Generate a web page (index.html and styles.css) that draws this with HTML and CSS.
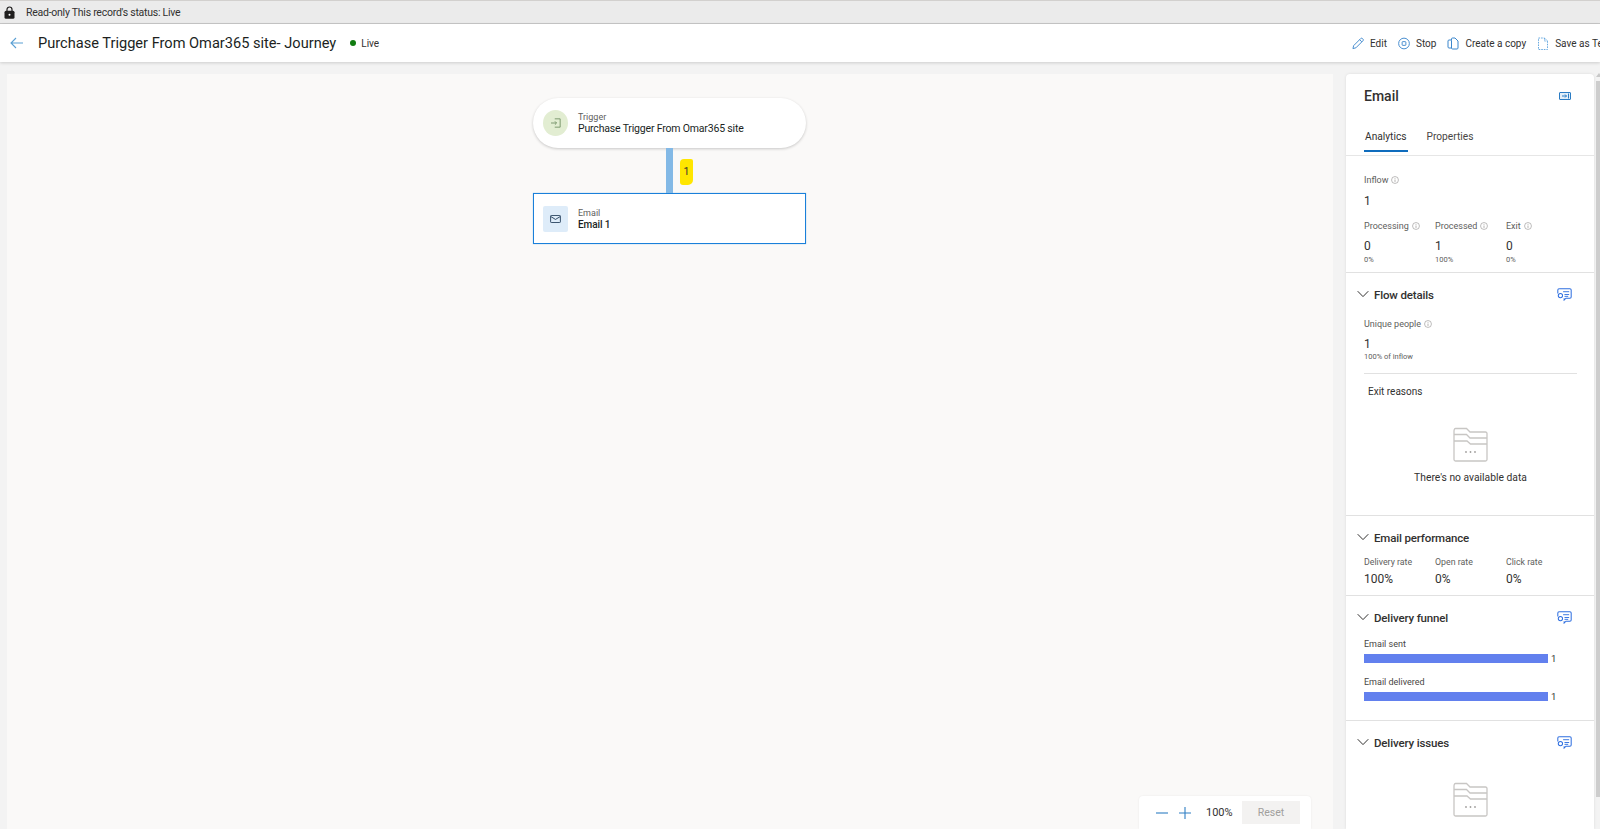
FILE: index.html
```html
<!DOCTYPE html>
<html lang="en">
<head>
<meta charset="utf-8">
<title>Purchase Trigger From Omar365 site- Journey</title>
<link rel="stylesheet" href="styles.css">
</head>
<body>
<svg class="defs" width="0" height="0" aria-hidden="true">
  <symbol id="info" viewBox="0 0 10 10"><circle cx="5" cy="5" r="4.3" fill="none" stroke="#8a8886" stroke-width=".7"/><path d="M5 4.4v3M5 2.6v.9" stroke="#8a8886" stroke-width=".8" fill="none"/></symbol>
  <symbol id="chev" viewBox="0 0 12 8"><path d="M.7 1.2 6 6.6l5.3-5.4" fill="none" stroke="#323130" stroke-width="1"/></symbol>
  <symbol id="chat" viewBox="0 0 16 14"><path d="M2.2.8h11.6c.8 0 1.4.6 1.4 1.4v7.4c0 .8-.6 1.4-1.4 1.4H9.6L7.6 13v-2.0" fill="none" stroke="#2f6fe0" stroke-width="1.1"/><path d="M.8 6V2.2C.8 1.400 1.400.8 2.200.8" fill="none" stroke="#2f6fe0" stroke-width="1.1"/><circle cx="3.600" cy="8.200" r="2.300" fill="none" stroke="#2f6fe0" stroke-width="1.100"/><path d="M6.500 4h6.500M8 7h5M8 9h4" stroke="#2f6fe0" stroke-width="1"/></symbol>
  <symbol id="folder" viewBox="0 0 35 35"><path d="M1 4.500V32.500c0 .9.600 1.500 1.500 1.500h30c.900 0 1.500-.600 1.500-1.500V6.500c0-.9-.600-1.500-1.500-1.500H17L13.500 1.500H2.500C1.600 1.500 1 2.500 1 4.500Z" fill="none" stroke="#c8c6c4" stroke-width="1.300"/><path d="M1 7.500h12.500l3.500 3.500h17M1 14h13l3.500 3h16.500" fill="none" stroke="#c8c6c4" stroke-width="1.300"/><circle cx="13" cy="25" r=".9" fill="#a19f9d"/><circle cx="17.500" cy="25" r=".9" fill="#a19f9d"/><circle cx="22" cy="25" r=".9" fill="#a19f9d"/></symbol>
</svg>

<div class="notice">
  <svg class="lock" viewBox="0 0 11 13"><path d="M3 5V3.500a2.500 2.500 0 0 1 5 0V5" fill="none" stroke="#201f1e" stroke-width="1.200"/><rect x=".5" y="4.800" width="10" height="8" rx="1.500" fill="#201f1e"/><circle cx="5.500" cy="8.800" r="1" fill="#fff"/></svg>
  <span>Read-only This record's status: Live</span>
</div>

<header class="topbar">
  <svg class="back" viewBox="0 0 13 12"><path d="M6 1 1 6l5 5M1 6h12" fill="none" stroke="#5a9fd4" stroke-width="1.100"/></svg>
  <h1 class="page-title">Purchase Trigger From Omar365 site- Journey</h1>
  <span class="status-dot"></span>
  <span class="status-text">Live</span>
  <span class="spacer"></span>
  <nav class="actions">
    <a class="action"><svg class="action-icon" viewBox="0 0 13 13"><path d="M1 12l.8-3.200L9.500 1.100c.500-.500 1.300-.500 1.800 0l.600.600c.500.500.500 1.300 0 1.800L4.200 11.200 1 12ZM8.300 2.400l2.300 2.300" fill="none" stroke="#3b86cc" stroke-width="1"/></svg>Edit</a>
    <a class="action"><svg class="action-icon" viewBox="0 0 13 13"><circle cx="6.500" cy="6.500" r="5.800" fill="none" stroke="#3b86cc"/><rect x="4.500" y="4.500" width="4" height="4" rx=".6" fill="none" stroke="#3b86cc"/></svg>Stop</a>
    <a class="action"><svg class="action-icon" viewBox="0 0 12 13"><path d="M4.500 3.500V2c0-.6.400-1 1-1H8l3 3v7c0 .6-.4 1-1 1H5.500c-.6 0-1-.4-1-1V3.500Z" fill="none" stroke="#3b86cc"/><path d="M4.500 3H2c-.6 0-1 .4-1 1v6c0 .6.400 1 1 1h2.500" fill="none" stroke="#3b86cc"/></svg>Create a copy</a>
    <a class="action"><svg class="action-icon" viewBox="0 0 10 13"><path d="M.5 1h6l3 3v8.500H.5V1ZM6.500 1v3h3" fill="none" stroke="#6aaae0" stroke-dasharray="1.600 1"/></svg>Save as Template</a>
  </nav>
</header>

<main class="workspace">
  <section class="canvas">
    <div class="node node-trigger">
      <span class="node-icon icon-trigger"><svg viewBox="0 0 12 12" width="10" height="10"><path d="M4.500 1h6.500v10H4.500M0 6h6.500M4.700 4l2 2-2 2" fill="none" stroke="#6b8a5e" stroke-width="1"/></svg></span>
      <div class="node-text"><div class="node-kind">Trigger</div><div class="node-name">Purchase Trigger From Omar365 site</div></div>
    </div>
    <div class="link"><span class="link-count">1</span></div>
    <div class="node node-email">
      <span class="node-icon icon-email"><svg viewBox="0 0 12 9" width="11" height="8"><rect x=".5" y=".5" width="11" height="8" rx=".8" fill="none" stroke="#1f3a56"/><path d="M.8 1.800 6 5l5.200-3.200" fill="none" stroke="#1f3a56"/></svg></span>
      <div class="node-text"><div class="node-kind">Email</div><div class="node-name strong">Email 1</div></div>
    </div>
    <div class="zoombar">
      <svg class="zoom-btn" viewBox="0 0 12 12"><path d="M0 6h12" stroke="#2f7fc4" stroke-width="1.100"/></svg>
      <svg class="zoom-btn" viewBox="0 0 12 12"><path d="M0 6h12M6 0v12" stroke="#2f7fc4" stroke-width="1.100"/></svg>
      <span class="zoom-value">100%</span>
      <span class="zoom-reset">Reset</span>
    </div>
  </section>

  <aside class="panel">
    <div class="panel-head">
      <div class="panel-title-row">
        <h2 class="panel-title">Email</h2>
        <svg class="panel-collapse" viewBox="0 0 12 8"><rect x=".5" y=".5" width="11" height="7" rx=".5" fill="#e3eff9" stroke="#2b7cc4"/><path d="M3 4h4.500M6 2.500 7.500 4 6 5.500M9.500 1.500v5" fill="none" stroke="#2b7cc4"/></svg>
      </div>
      <div class="tabs"><span class="tab active">Analytics</span><span class="tab">Properties</span></div>
    </div>

    <div class="section sec-inflow">
      <div class="label">Inflow <svg class="info"><use href="#info"/></svg></div>
      <div class="value inflow-value">1</div>
      <div class="stat-grid stat-grid-top">
        <div><div class="label">Processing <svg class="info"><use href="#info"/></svg></div><div class="value">0</div><div class="small">0%</div></div>
        <div><div class="label">Processed <svg class="info"><use href="#info"/></svg></div><div class="value">1</div><div class="small">100%</div></div>
        <div><div class="label">Exit <svg class="info"><use href="#info"/></svg></div><div class="value">0</div><div class="small">0%</div></div>
      </div>
    </div>

    <div class="section sec-flow">
      <div class="sec-head"><svg class="chev"><use href="#chev"/></svg><h3>Flow details</h3><svg class="chat"><use href="#chat"/></svg></div>
      <div class="label unique">Unique people <svg class="info"><use href="#info"/></svg></div>
      <div class="value unique-value">1</div>
      <div class="small">100% of inflow</div>
      <div class="inner-rule"></div>
      <div class="exit-title">Exit reasons</div>
      <div class="empty"><svg class="folder"><use href="#folder"/></svg><div class="empty-text">There's no available data</div></div>
    </div>

    <div class="section sec-perf">
      <div class="sec-head"><svg class="chev"><use href="#chev"/></svg><h3>Email performance</h3></div>
      <div class="stat-grid perf-grid">
        <div><div class="label">Delivery rate</div><div class="value">100%</div></div>
        <div><div class="label">Open rate</div><div class="value">0%</div></div>
        <div><div class="label">Click rate</div><div class="value">0%</div></div>
      </div>
    </div>

    <div class="section sec-funnel">
      <div class="sec-head"><svg class="chev"><use href="#chev"/></svg><h3>Delivery funnel</h3><svg class="chat"><use href="#chat"/></svg></div>
      <div class="bar-label first">Email sent</div>
      <div class="bar-row"><span class="bar"></span><span class="bar-num">1</span></div>
      <div class="bar-label">Email delivered</div>
      <div class="bar-row"><span class="bar"></span><span class="bar-num">1</span></div>
    </div>

    <div class="section sec-issues">
      <div class="sec-head"><svg class="chev"><use href="#chev"/></svg><h3>Delivery issues</h3><svg class="chat"><use href="#chat"/></svg></div>
      <div class="empty issues-empty"><svg class="folder"><use href="#folder"/></svg><div class="empty-text">There's no available data</div></div>
    </div>
  </aside>

  <div class="scroller"><span class="scroll-arrow"></span><span class="scroll-thumb"></span></div>
</main>
</body>
</html>
```

FILE: styles.css
```css
* { box-sizing: border-box; }
html, body { margin: 0; height: 829px; overflow: hidden; }
body {
  display: flex; flex-direction: column;
  background: #f3f3f3; color: #323130;
  font-family: Roboto, "Noto Sans", "Liberation Sans", sans-serif;
  font-size: 11px;
}
.defs { position: absolute; }

.notice {
  height: 24px; flex: none; display: flex; align-items: center;
  padding-left: 4px; background: #ebebeb;
  border-top: 1px solid #d2d0ce; border-bottom: 1px solid #c8c8c8;
  font-size: 10.500px; letter-spacing: -.25px; color: #323130;
}
.lock { width: 11px; height: 13px; margin-right: 11px; }

.topbar {
  height: 38px; flex: none; display: flex; align-items: center;
  background: #fff; box-shadow: 0 1px 3px rgba(0,0,0,.16); position: relative; z-index: 2;
}
.back { width: 13px; height: 12px; margin-left: 10px; margin-right: 15px; }
.page-title { margin: 0; font-size: 14.600px; font-weight: 400; color: #201f1e; white-space: nowrap; }
.status-dot { width: 6px; height: 6px; border-radius: 50%; background: #107c10; margin-left: 14px; margin-right: 5px; }
.status-text { font-size: 10px; }
.spacer { flex: 1; }
.actions { width: 248px; flex: none; display: flex; gap: 11px; overflow: hidden; font-size: 10px; white-space: nowrap; }
.action { display: flex; align-items: center; gap: 6px; flex: none; color: #323130; }
.action-icon { width: 12px; height: 13px; flex: none; }

.workspace { flex: 1; min-height: 0; display: flex; padding: 12px 0 0 7px; }
.canvas {
  position: relative; width: 1326px; flex: none;
  background: #faf9f8; padding: 24px 1px 0 0;
  display: flex; flex-direction: column; align-items: center;
}
.node { width: 273px; display: flex; align-items: center; background: #fff; padding-left: 10px; gap: 10px; }
.node-trigger { height: 50px; border-radius: 25px; box-shadow: 0 1px 3px rgba(0,0,0,.2); }
.node-email { height: 51px; border: 1px solid #1a80da; box-shadow: 0 0 1px rgba(26,128,218,.5); padding-left: 9px; }
.node-icon { width: 25px; height: 26px; flex: none; display: flex; align-items: center; justify-content: center; }
.icon-trigger { background: #e2edd2; border-radius: 50%; }
.icon-email { background: #deecf9; border-radius: 2px; }
.node-kind { font-size: 9px; line-height: 11px; padding-top: 1px; color: #605e5c; box-sizing: content-box; }
.node-name { font-size: 10.500px; line-height: 13px; margin-top: -1px; letter-spacing: -.18px; color: #201f1e; font-weight: 400; }
.strong { font-weight: 500; font-size: 10px; letter-spacing: -.1px; }

.link { width: 7px; height: 45px; background: #83b9e6; position: relative; }
.link-count {
  position: absolute; left: 14px; top: 11px; width: 13px; height: 26px;
  background: #ffe600; border-radius: 4px 2px 5px 3px; text-align: center;
  font-size: 10.500px; line-height: 26px; color: #323130;
}

.zoombar {
  position: absolute; left: 1132px; bottom: 0; width: 172px; height: 33px;
  background: #fff; border-radius: 4px 4px 0 0; display: flex; align-items: center;
  padding-left: 17px; box-shadow: 0 0 2px rgba(0,0,0,.08);
}
.zoom-btn { width: 12px; height: 12px; margin-right: 11px; }
.zoom-value { font-size: 11px; margin-left: 4px; width: 36px; }
.zoom-reset { width: 58px; height: 23px; background: #f3f2f1; color: #a19f9d; text-align: center; line-height: 23px; font-size: 10.500px; }

.panel {
  width: 248px; flex: none; margin-left: 13px; background: #fff;
  border-radius: 4px 4px 0 0; overflow: hidden;
  box-shadow: 0 0 3px rgba(0,0,0,.1);
}
.panel-head { height: 82px; border-bottom: 1px solid #e6e6e6; padding: 11px 0 0 18px; }
.panel-title-row { display: flex; align-items: center; justify-content: space-between; padding-right: 23px; }
.panel-title { margin: 0; font-size: 14px; line-height: 22px; font-weight: 500; color: #323130; }
.panel-collapse { width: 12px; height: 8px; }
.tabs { display: flex; gap: 18px; margin-top: 20px; font-size: 10.200px; line-height: 20px; }
.tab { height: 25px; color: #484644; padding: 0 1px; }
.tab.active { border-bottom: 2px solid #0f6cbd; color: #323130; }

.section { border-bottom: 1px solid #e1e1e1; padding-left: 18px; }
.section:last-child { border-bottom: 0; }
.label { font-size: 9px; line-height: 16px; color: #605e5c; white-space: nowrap; display: flex; align-items: center; gap: 3px; }
.info { width: 8px; height: 8px; flex: none; }
.value { font-size: 12px; line-height: 18px; color: #323130; }
.small { font-size: 7.500px; line-height: 10px; color: #605e5c; }

.sec-inflow { height: 117px; padding-top: 16px; }
.inflow-value { margin-top: 4px; }
.stat-grid { display: grid; grid-template-columns: 71px 71px 71px; }
.stat-grid-top { margin-top: 8px; }
.stat-grid-top .value { margin-top: 3px; }

.sec-head { display: flex; align-items: center; height: 20px; margin-left: -7px; padding-right: 22px; }
.sec-head h3 { margin: 0 0 0 5px; padding-top: 1px; flex: 1; font-size: 11.500px; letter-spacing: -.15px; font-weight: 500; color: #323130; }
.chev { width: 12px; height: 8px; flex: none; margin-left: 0; }
.chat { width: 15px; height: 13px; flex: none; }

.sec-flow { height: 243px; padding-top: 11px; }
.unique { margin-top: 12px; }
.unique-value { margin-top: 4px; line-height: 16px; }
.inner-rule { height: 1px; width: 213px; background: #e1e1e1; margin-top: 11px; }
.exit-title { font-size: 10px; line-height: 16px; margin: 10px 0 0 4px; }
.empty { display: flex; flex-direction: column; align-items: center; width: 213px; margin-top: 27px; }
.folder { width: 35px; height: 35px; display: block; }
.empty-text { font-size: 10.300px; line-height: 16px; margin-top: 8px; color: #323130; }

.sec-perf { height: 80px; padding-top: 11px; }
.perf-grid { margin-top: 8px; }
.perf-grid .label { line-height: 14px; font-size: 8.800px; }
.perf-grid .value { line-height: 18px; margin-top: 1px; }

.sec-funnel { height: 125px; padding-top: 11px; }
.bar-label { font-size: 9px; line-height: 14px; color: #484644; margin-top: 12px; }
.bar-label.first { margin-top: 10px; }
.bar-row { display: flex; align-items: flex-end; gap: 3px; margin-top: 2px; height: 10px; }
.bar { width: 184px; height: 9px; background: #6280ee; }
.bar-num { font-size: 9.500px; line-height: 9px; }

.sec-issues { padding-top: 11px; }
.issues-empty { margin-top: 30px; }
.issues-empty .empty-text { margin-top: 10px; }

.scroller { width: 4px; flex: none; margin-left: 2px; position: relative; margin-top: -1px; }
.scroll-arrow { display: block; width: 0; height: 0; margin: 0 auto; border: 3px solid transparent; border-bottom: 4px solid #c8c8c8; border-top: 0; }
.scroll-thumb { display: block; width: 4px; height: 716px; margin-top: 4px; background: #cdcdcd; }
```
